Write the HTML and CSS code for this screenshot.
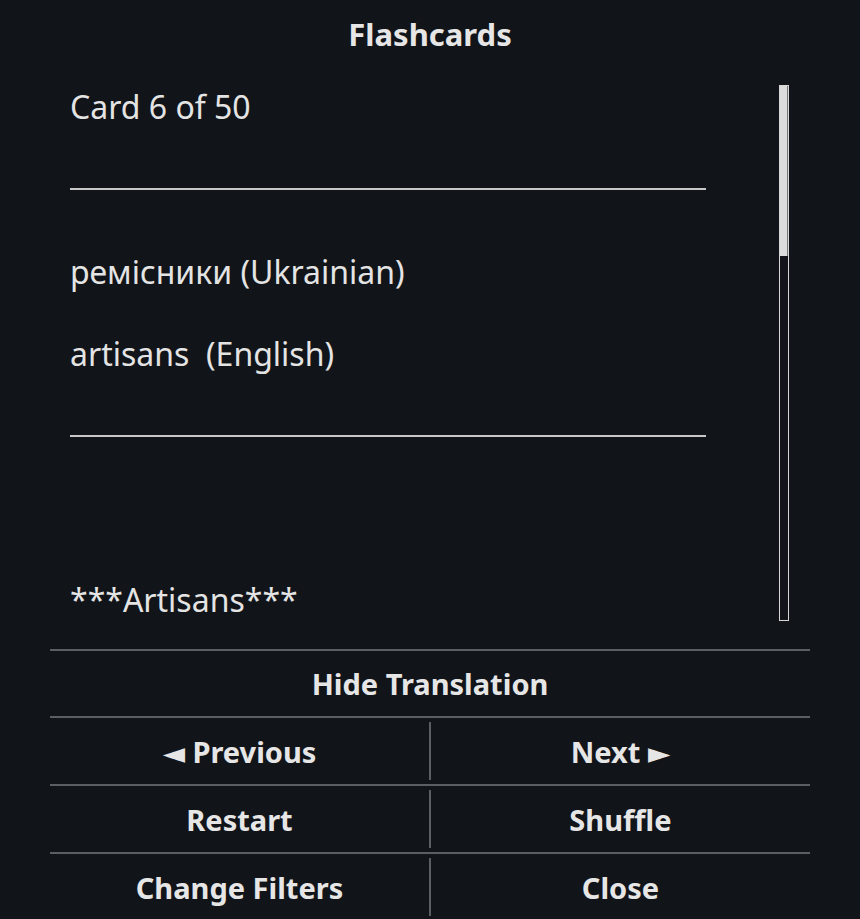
FILE: index.html
```html
<!DOCTYPE html>
<html lang="en">
<head>
    <meta charset="UTF-8">
    <meta name="viewport" content="width=device-width, initial-scale=1.0">
    <title>Flashcards</title>
    <link rel="stylesheet" href="styles.css">
</head>
<body>
    <div class="dialog">
        <h1 class="title">Flashcards</h1>
        <div class="card-area">
            <div class="card-body">
                <p class="card-line">Card 6 of 50</p>
                <hr class="rule top-rule">
                <p class="card-line word">ремісники (Ukrainian)</p>
                <p class="card-line word">artisans&nbsp; (English)</p>
                <hr class="rule">
                <p class="card-line note">***Artisans***</p>
            </div>
            <div class="scrollbar">
                <div class="thumb"></div>
            </div>
        </div>
        <div class="actions">
            <div class="row single">
                <button class="btn">Hide Translation</button>
            </div>
            <div class="row">
                <button class="btn">◄ Previous</button>
                <span class="sep"></span>
                <button class="btn">Next ►</button>
            </div>
            <div class="row">
                <button class="btn">Restart</button>
                <span class="sep"></span>
                <button class="btn">Shuffle</button>
            </div>
            <div class="row">
                <button class="btn">Change Filters</button>
                <span class="sep"></span>
                <button class="btn">Close</button>
            </div>
        </div>
    </div>
</body>
</html>
```

FILE: styles.css
```css
body {
    margin: 0;
    padding: 0;
    background-color: #111419;
    color: #e4e4e4;
    font-family: "Noto Sans", "Open Sans", "DejaVu Sans", sans-serif;
    height: 919px;
    overflow: hidden;
}
.dialog {
    display: flex;
    flex-direction: column;
}
.title {
    margin: 0;
    height: 68px;
    line-height: 68px;
    text-align: center;
    font-size: 31px;
    font-weight: bold;
    color: #e6e6e6;
}
.card-area {
    display: flex;
    height: 536px;
    margin: 17px 50px 0 50px;
}
.card-body {
    width: 636px;
    margin-left: 20px;
    overflow: hidden;
}
.card-line {
    margin: 0;
    font-size: 32px;
    line-height: 42px;
    white-space: pre;
}
.card-line:first-child {
    margin-top: 1px;
}
.rule {
    border: none;
    height: 2px;
    background-color: #c8c8c8;
    margin: 60px 0 0 0;
}
.word {
    margin-top: 40px;
}
.top-rule + .word {
    margin-top: 61px;
}
.rule + .note {
    margin-top: 142px;
}
.scrollbar {
    width: 8px;
    border: 1px solid #d6d6d6;
    margin-left: auto;
    margin-right: 21px;
    background-color: #111419;
}
.thumb {
    height: 170px;
    background-color: #dcdcdc;
    border-right: 1px solid #777;
}
.actions {
    margin: 28px 50px 0 50px;
}
.row {
    display: grid;
    grid-template-columns: 1fr 2px 1fr;
    height: 66px;
    border-top: 2px solid #5b5f64;
}
.row.single {
    grid-template-columns: 1fr;
    height: 65px;
}
.sep {
    background-color: #5b5f64;
    margin: 4px 0;
}
.btn {
    background: none;
    border: none;
    padding: 0;
    color: #e6e6e6;
    font-family: "Noto Sans", "Open Sans", "DejaVu Sans", sans-serif;
    font-size: 29px;
    font-weight: bold;
    cursor: pointer;
}
```
